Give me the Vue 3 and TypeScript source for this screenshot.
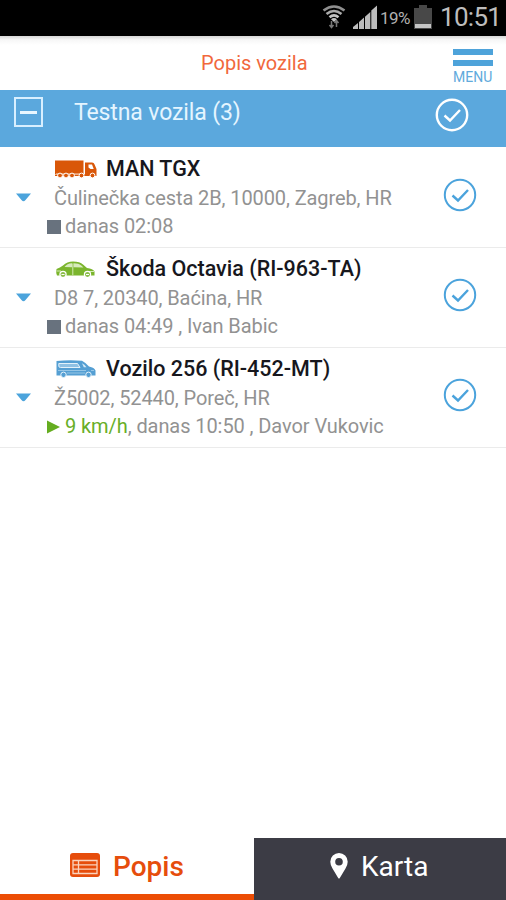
<script setup lang="ts">
interface Vehicle {
  kind: 'truck' | 'car' | 'van'
  name: string
  address: string
  speed?: string
  status: string
}

const vehicles: Vehicle[] = [
  { kind: 'truck', name: 'MAN TGX', address: 'Čulinečka cesta 2B, 10000, Zagreb, HR', status: 'danas 02:08' },
  { kind: 'car', name: 'Škoda Octavia (RI-963-TA)', address: 'D8 7, 20340, Baćina, HR', status: 'danas 04:49 , Ivan Babic' },
  { kind: 'van', name: 'Vozilo 256 (RI-452-MT)', address: 'Ž5002, 52440, Poreč, HR', speed: '9 km/h', status: ', danas 10:50 , Davor Vukovic' },
]
</script>

<template>
  <div class="screen">
    <div class="statusbar">
      <svg class="wifi" width="24" height="26" viewBox="0 0 24 26">
        <g fill="none" stroke="#8f8f8f" stroke-width="2.6">
          <path d="M1.5 6.5Q12-1.500 22.500 6.500" />
          <path d="M4.500 10Q12 4 19.500 10" stroke="#aaa" />
          <path d="M7.500 13.300Q12 9.500 16.500 13.300" stroke="#c4c4c4" />
        </g>
        <path d="M9 15.200Q12 12.800 15 15.200L12 18z" fill="#c4c4c4" />
        <path d="M9.500 17v6M7.500 21l2 2.500 2-2.500M14.500 23v-6M12.500 19l2-2.500 2 2.500" fill="none" stroke="#777" stroke-width="1.500" />
      </svg>
      <svg class="signal" width="24" height="24" viewBox="0 0 24 24">
        <path d="M0 24V22L5 18V24zM6 24V17L11 12.500V24zM12 24V11.700L17.300 7V24zM18.300 24V5.500L24 .5V24z" fill="#bcbcbc" />
      </svg>
      <span class="percent">19%</span>
      <svg class="battery" width="18" height="24" viewBox="0 0 18 24">
        <path d="M0 3H5V0H13V3H18V24H0z" fill="#484848" />
        <path d="M1 19H17V23H1z" fill="#c6c6c6" />
      </svg>
      <span class="clock">10:51</span>
    </div>

    <header class="header">
      <h1 class="title">Popis vozila</h1>
      <button class="menu"><i></i><i></i><span>MENU</span></button>
    </header>

    <section class="group">
      <span class="collapse"></span>
      <span class="group-name">Testna vozila (3)</span>
      <svg class="check" width="34" height="34" viewBox="0 0 34 34">
        <circle cx="17" cy="17" r="15.200" />
        <path d="M9.500 17.500L15 22.500 25 12" />
      </svg>
    </section>

    <ul class="list">
      <li v-for="v in vehicles" :key="v.name" class="row">
        <svg class="arrow" width="15" height="9" viewBox="0 0 15 9"><path d="M0 .5H15L9.500 7Q7.500 9.500 5.500 7z" fill="#4ca4dc" /></svg>
        <div class="info">
          <div class="name-line">
            <svg v-if="v.kind === 'truck'" class="vehicle" width="43" height="20" viewBox="0 0 43 20">
              <path d="M0 .5H28.500V14H0zM30 2.500H37Q39 2.500 39.600 4.500L41.500 9V15H30zM0 14.500H41.500V16H0z" fill="#d95708" />
              <path d="M33.500 4.500H37L38.700 9H35.500L33.500 7.500z" fill="#fff" />
              <path d="M1 13.800H29" stroke="#f3b48b" />
              <g fill="#d95708" stroke="#fff">
                <circle cx="5" cy="15.500" r="2.400" /><circle cx="11" cy="15.500" r="2.400" /><circle cx="17" cy="15.500" r="2.400" /><circle cx="26.500" cy="15.500" r="2.400" /><circle cx="37.500" cy="15.500" r="2.400" />
              </g>
            </svg>
            <svg v-else-if="v.kind === 'car'" class="vehicle" width="43" height="20" viewBox="0 0 43 20">
              <path d="M1.500 9Q5 7.500 8 5.500 12 1.500 18 1.500 25 1.500 28 4.500L32 8Q38 8.500 39.500 11.500L39.500 15.500H2Q.8 13 1.500 9z" fill="#7bb52d" />
              <path d="M9.500 7Q12 3.500 17 3.300V7.300zM18.500 3.300Q24 3.300 26 5.300L28.500 7.600 18.500 7.300z" fill="#d7eabd" />
              <path d="M2 11H6M34 11.500H39M17.800 3.500V15" stroke="#d4eab6" />
              <g fill="#8bbd49" stroke="#fff" stroke-width="1.200"><circle cx="8" cy="14.500" r="3.100" /><circle cx="32.500" cy="14.500" r="3.100" /></g>
              <path d="M6.500 14.500H9.500M31 14.500H34" stroke="#fff" />
            </svg>
            <svg v-else class="vehicle" width="43" height="20" viewBox="0 0 43 20">
              <path d="M1.500 1Q15-.5 27 .8 31 3 34 6.500 39.500 7.500 40.500 10.500V15.500H1.500z" fill="#559fd3" />
              <path d="M3.800 3.500H22.500L25 7.500H5.500Q3.800 7.500 3.800 6z" fill="#8fc1e4" stroke="#e3f2fb" />
              <path d="M27 3.200Q30 4.500 31.500 7.200H28.800z" fill="#d5eaf7" />
              <path d="M3 10.500H31M12 13H30M36 10.500H39" stroke="#a7d0eb" stroke-width=".8" />
              <g fill="#559fd3" stroke="#e6f3fb"><circle cx="8.500" cy="14.800" r="2.700" /><circle cx="33.500" cy="14.800" r="2.700" /></g>
            </svg>
            <span class="name">{{ v.name }}</span>
          </div>
          <div class="address">{{ v.address }}</div>
          <div class="status">
            <svg v-if="v.speed" class="state" width="14" height="14" viewBox="0 0 14 14"><path d="M0 .5L13 7 0 13.500z" fill="#65ad20" /></svg>
            <i v-else class="state stopped"></i>
            <span class="status-text"><b v-if="v.speed">{{ v.speed }}</b>{{ v.status }}</span>
          </div>
        </div>
        <svg class="check" width="34" height="34" viewBox="0 0 34 34">
          <circle cx="17" cy="17" r="15.200" />
          <path d="M9.500 17.500L15 22.500 25 12" />
        </svg>
      </li>
    </ul>

    <nav class="tabs">
      <a class="tab active">
        <svg width="30" height="24" viewBox="0 0 30 24">
          <rect width="30" height="24" rx="3" fill="#e64d0c" />
          <path d="M3 7.500H27V20.500H3zM3 11.800H27M3 16.200H27M8.500 7.500V20.500" fill="none" stroke="#fbd3bd" stroke-width="1.300" />
        </svg>
        <span class="label">Popis</span>
      </a>
      <a class="tab map">
        <svg width="18" height="26" viewBox="0 0 18 26">
          <path fill-rule="evenodd" d="M9 0A8.700 8.700 0 0 1 17.700 8.700Q17.700 12 15.500 15.500L9.800 25Q9 26.200 8.200 25L2.500 15.500Q.3 12 .3 8.700A8.700 8.700 0 0 1 9 0zM9 5A3.800 3.800 0 1 0 9 12.600 3.800 3.800 0 1 0 9 5z" fill="#fff" />
        </svg>
        <span class="label">Karta</span>
      </a>
    </nav>
  </div>
</template>

<style>
body { margin: 0; background: #fff; }
</style>

<style scoped>
.screen { width: 506px; height: 900px; display: flex; flex-direction: column; background: #fff; font-family: Roboto, "Liberation Sans", sans-serif; overflow: hidden; }
.screen * { box-sizing: border-box; }
.screen span, .screen div { white-space: nowrap; }
.statusbar { height: 36px; flex: none; background: #000; display: flex; align-items: flex-start; padding-left: 322px; color: #bdbdbd; }
.wifi { margin-top: 4px; }
.signal { margin: 5px 0 0 7px; }
.percent { width: 34px; margin-left: 3px; font-size: 17px; line-height: 36px; letter-spacing: -.5px; color: #b0b0b0; }
.battery { margin-top: 5px; }
.clock { margin-left: 8px; font-size: 26px; line-height: 35px; letter-spacing: -.7px; }
.header { height: 54px; flex: none; display: flex; background: linear-gradient(#d6d6d6, #f7f7f7 4px, #fff 9px); }
.title { width: 110px; margin: 0 0 0 201px; font-size: 20px; line-height: 54px; font-weight: 400; color: #f1683c; white-space: nowrap; }
.menu { width: 42px; margin: 13px 0 0 141px; padding: 0; border: 0; background: none; display: flex; flex-direction: column; align-items: flex-start; font: 14px/16px Roboto, sans-serif; color: #61aadc; }
.menu i { width: 40px; height: 6px; margin: 0 0 5px 1px; background: #4ea3da; }
.menu span { margin: -2px 0 0 1px; }
.group { height: 57px; flex: none; display: flex; background: #5ba8dd; color: #e5f5ff; }
.collapse { width: 29px; height: 30px; margin: 7px 0 0 14px; border: 2px solid #d8efff; display: flex; align-items: center; justify-content: center; }
.collapse::before { content: ""; width: 17px; height: 3px; background: #e9f7ff; }
.group-name { width: 361px; margin-left: 31px; font-size: 23px; line-height: 46px; letter-spacing: -.12px; }
.check { fill: none; stroke: #4ba3dc; stroke-width: 2; flex: none; }
.check path { stroke-width: 2.400; }
.group .check { margin-top: 8px; stroke: #fff; stroke-width: 2.400; }
.list { margin: 0; padding: 0; list-style: none; flex: 1; }
.row { height: 100px; display: flex; padding-left: 16px; box-shadow: 0 1px #ebebeb; }
.arrow { margin-top: 46px; }
.info { width: 398px; margin-left: 15px; padding-top: 6px; }
.name-line { height: 30px; display: flex; padding-left: 9px; line-height: 31px; }
.vehicle { margin: 7px 8px 0 0; }
.name { font-size: 21.500px; font-weight: 500; color: #17171d; }
.address { height: 28px; padding-left: 8px; font-size: 20px; line-height: 31px; letter-spacing: -.1px; color: #929292; }
.status { height: 29px; display: flex; font-size: 20px; line-height: 30px; letter-spacing: -.08px; color: #929292; }
.state { width: 14px; height: 14px; margin: 9px 4px 0 1px; }
.stopped { background: #68727e; }
.status b { font-weight: 400; color: #68ae28; }
.row .check { margin-left: -1px; margin-top: 31px; }
.tabs { height: 62px; flex: none; display: flex; font-size: 28px; }
.tab { display: flex; }
.active { width: 254px; padding: 15px 0 0 70px; border-bottom: 6px solid #ec4d05; color: #e64d0c; }
.map { flex: 1; padding: 15px 0 0 76px; background: #3c3c45; color: #fff; }
.label { line-height: 30px; margin: -1px 0 0 13px; font-weight: 500; }
.map .label { font-weight: 400; }
</style>
